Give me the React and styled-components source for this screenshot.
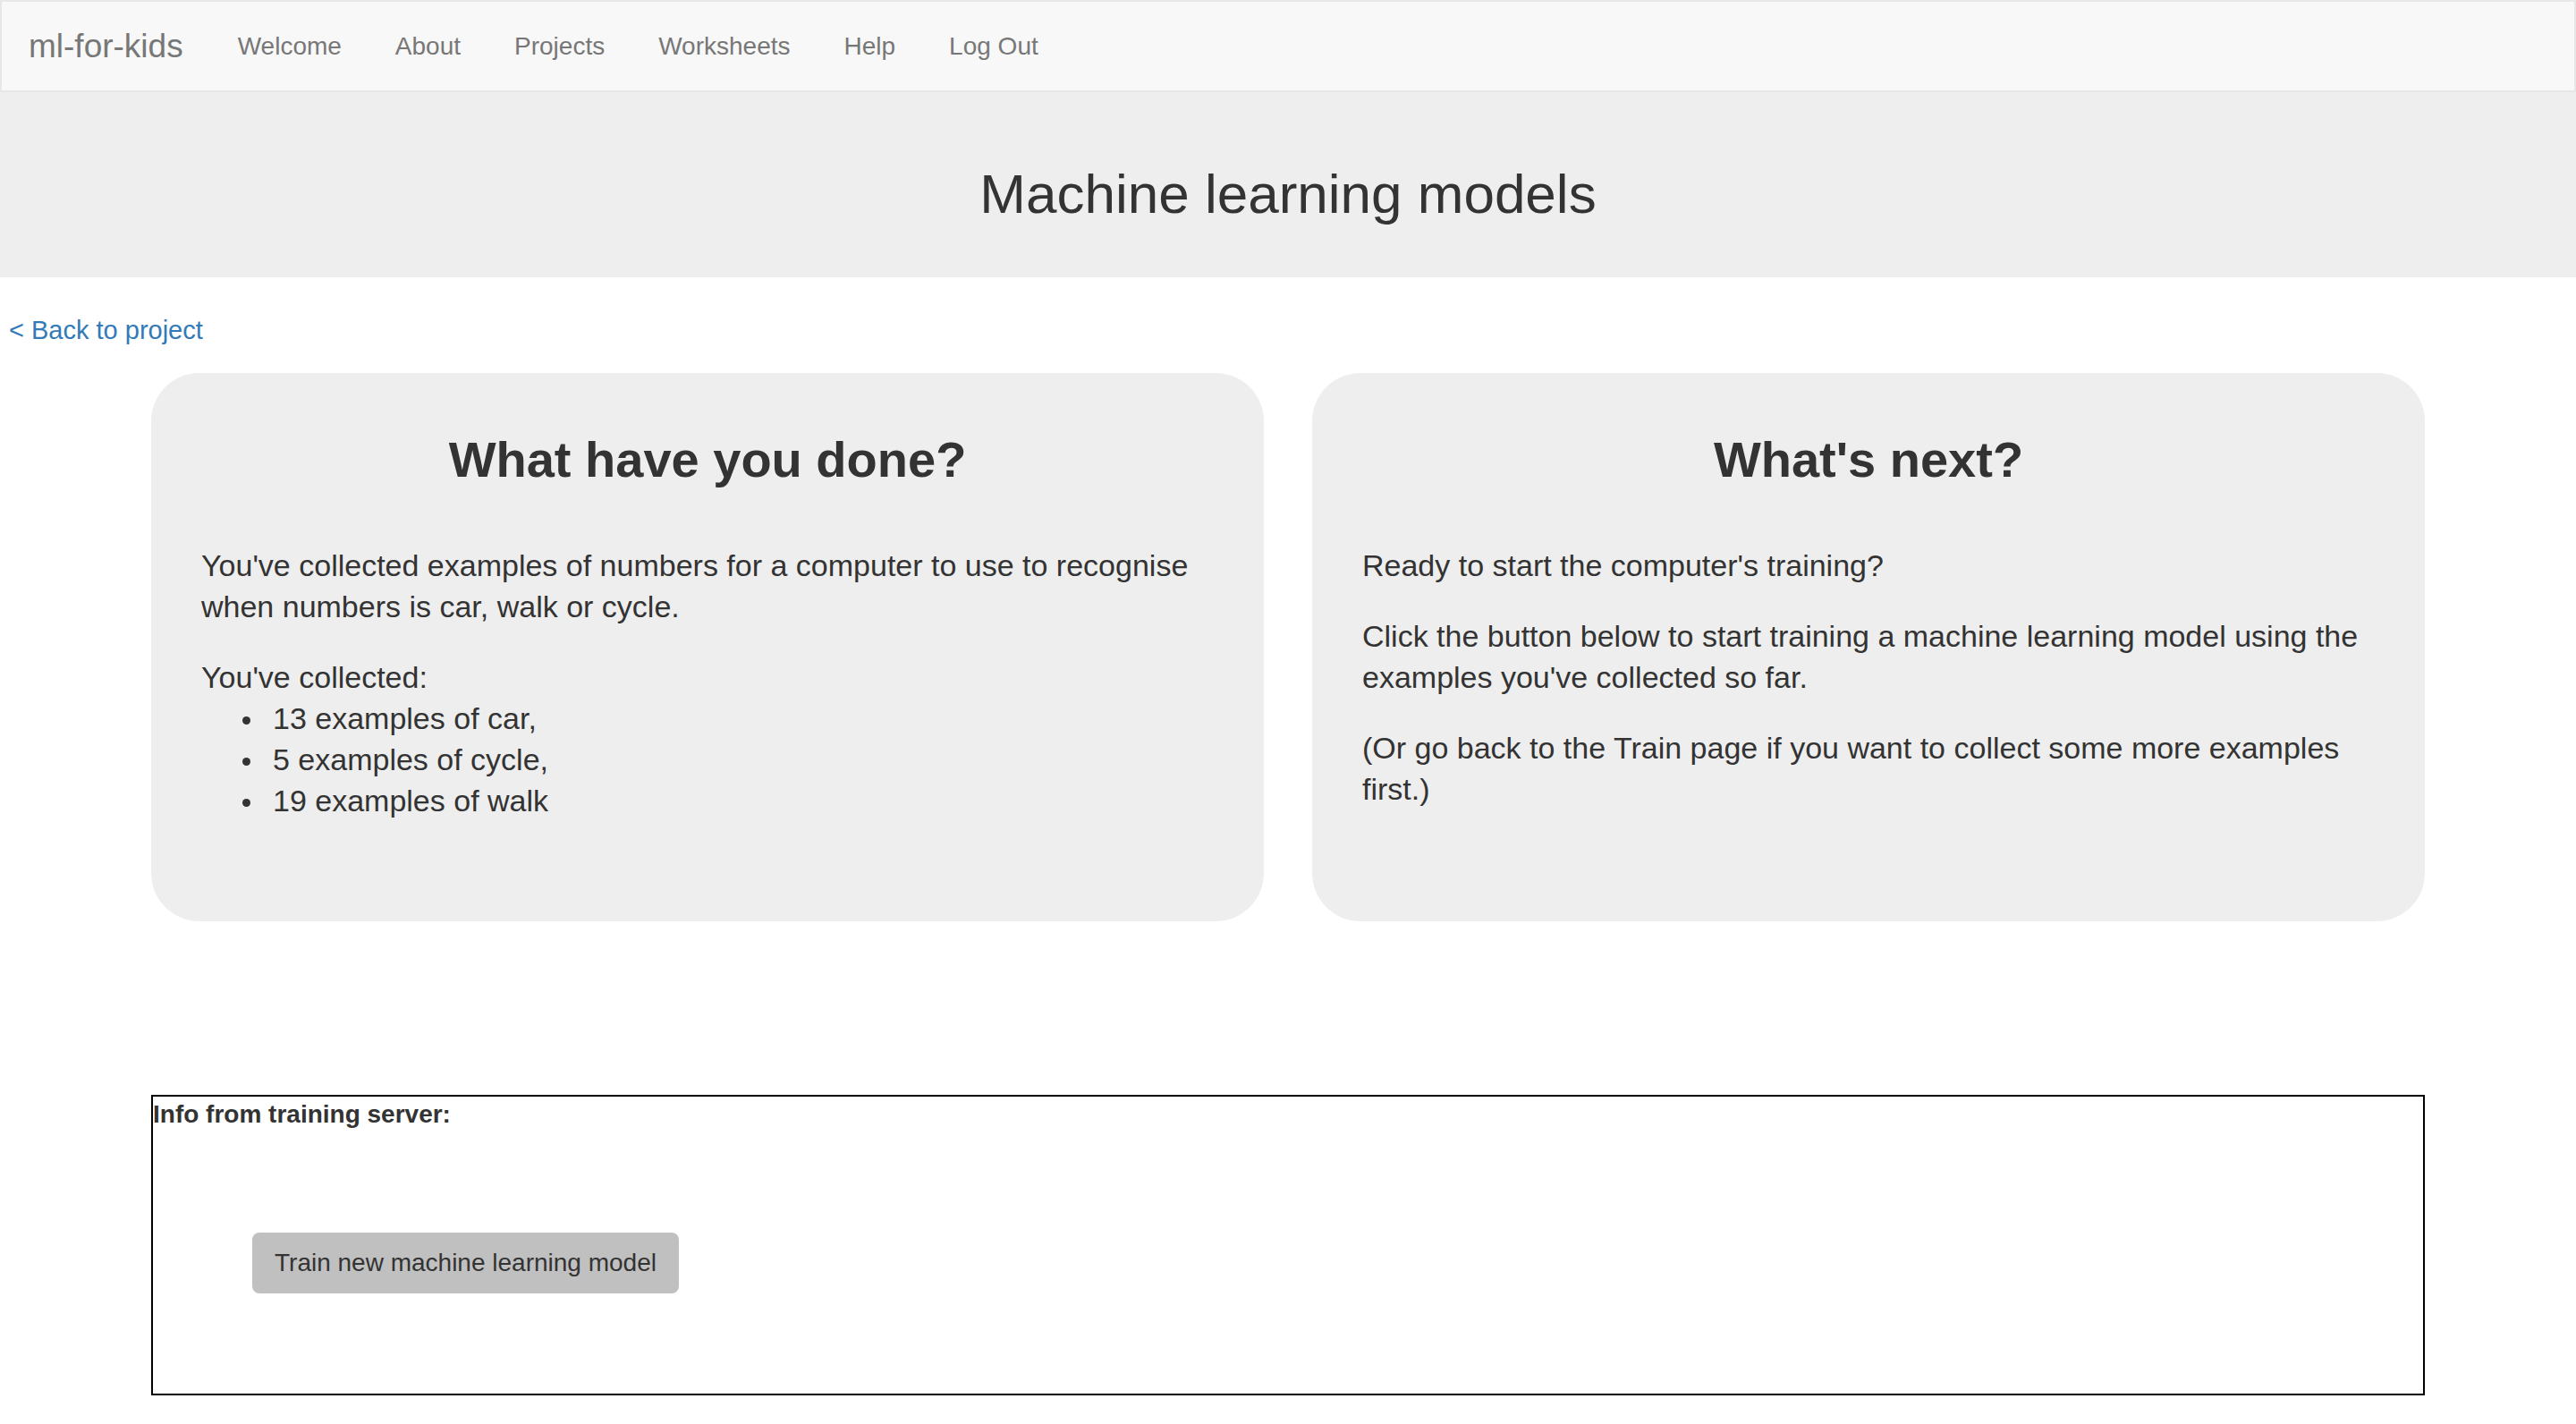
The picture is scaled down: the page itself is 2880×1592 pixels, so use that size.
import React from "react";
import styled, { createGlobalStyle } from "styled-components";

const GlobalStyle = createGlobalStyle`
  html, body {
    margin: 0;
    padding: 0;
    background: #ffffff;
  }
  body {
    font-family: "Liberation Sans", Helvetica, Arial, sans-serif;
    font-size: 28px;
    line-height: 40px;
    color: #333333;
  }
  * { box-sizing: border-box; }
`;

const Navbar = styled.nav`
  display: flex;
  align-items: center;
  height: 103px;
  background: #f8f8f8;
  border: 2px solid #e7e7e7;
`;

const Brand = styled.a`
  padding: 0 31px 0 30px;
  font-size: 37px;
  line-height: 40px;
  color: #777777;
  text-decoration: none;
`;

const NavList = styled.ul`
  display: flex;
  margin: 0;
  padding: 0;
  list-style: none;
`;

const NavLink = styled.a`
  display: block;
  padding: 0 30px;
  font-size: 28px;
  line-height: 40px;
  color: #777777;
  text-decoration: none;
`;

const Header = styled.header`
  background: #eeeeee;
  padding: 81px 0 60px;
`;

const PageTitle = styled.h2`
  margin: 0;
  font-size: 62px;
  font-weight: 500;
  line-height: 66px;
  text-align: center;
  color: #333333;
`;

const BackRow = styled.div`
  margin-top: 39px;
  padding-left: 10px;
`;

const BackLink = styled.a`
  color: #337ab7;
  font-size: 29px;
  line-height: 40px;
  text-decoration: none;
`;

const Container = styled.main`
  width: 2542px;
  margin: 0 auto;
`;

const CardGrid = styled.section`
  display: grid;
  grid-template-columns: 1fr 1fr;
  gap: 54px;
  margin-top: 27px;
`;

const Card = styled.div`
  background: #eeeeee;
  border-radius: 54px;
  padding: 26px 56px 79px;
`;

const CardTitle = styled.h3`
  margin: 40px 0 64px;
  font-size: 56px;
  font-weight: 700;
  line-height: 1.1;
  text-align: center;
  color: #333333;
`;

const Para = styled.div`
  margin: 0 0 33px;
  font-size: 34px;
  line-height: 46px;
`;

const List = styled.ul`
  margin: 0;
  padding-left: 80px;
  list-style: none;
`;

const ListItem = styled.li`
  &::before {
    content: "";
    display: inline-block;
    width: 9px;
    height: 9px;
    border-radius: 50%;
    background: #333333;
    margin-left: -34px;
    margin-right: 25px;
    vertical-align: middle;
  }
`;

const InfoBox = styled.section`
  margin-top: 194px;
  border: 2px solid #000000;
  height: 336px;
`;

const InfoLabel = styled.div`
  font-size: 28px;
  font-weight: 700;
  line-height: 40px;
  color: #333333;
`;

const ButtonArea = styled.div`
  padding: 112px 0 112px 111px;
`;

const TrainButton = styled.button`
  height: 68px;
  padding: 0 25px;
  border: none;
  border-radius: 8px;
  background: #c0c0c0;
  color: #333333;
  font-family: inherit;
  font-size: 28px;
  line-height: 40px;
  cursor: pointer;
`;

const navItems = ["Welcome", "About", "Projects", "Worksheets", "Help", "Log Out"];
const counts = ["13 examples of car,", "5 examples of cycle,", "19 examples of walk"];

export default function App() {
  return (
    <>
      <GlobalStyle />
      <Navbar>
        <Brand href="#">ml-for-kids</Brand>
        <NavList>
          {navItems.map((item) => (
            <li key={item}>
              <NavLink href="#">{item}</NavLink>
            </li>
          ))}
        </NavList>
      </Navbar>
      <Header>
        <PageTitle>Machine learning models</PageTitle>
      </Header>
      <BackRow>
        <BackLink href="#">&lt; Back to project</BackLink>
      </BackRow>
      <Container>
        <CardGrid>
          <Card>
            <CardTitle>What have you done?</CardTitle>
            <Para>
              You've collected examples of numbers for a computer to use to recognise when numbers is car, walk or cycle.
            </Para>
            <Para>
              You've collected:
              <List>
                {counts.map((c) => (
                  <ListItem key={c}>{c}</ListItem>
                ))}
              </List>
            </Para>
          </Card>
          <Card>
            <CardTitle>What's next?</CardTitle>
            <Para>Ready to start the computer's training?</Para>
            <Para>
              Click the button below to start training a machine learning model using the examples you've collected so far.
            </Para>
            <Para>
              (Or go back to the Train page if you want to collect some more examples first.)
            </Para>
          </Card>
        </CardGrid>
        <InfoBox>
          <InfoLabel>Info from training server:</InfoLabel>
          <ButtonArea>
            <TrainButton>Train new machine learning model</TrainButton>
          </ButtonArea>
        </InfoBox>
      </Container>
    </>
  );
}
